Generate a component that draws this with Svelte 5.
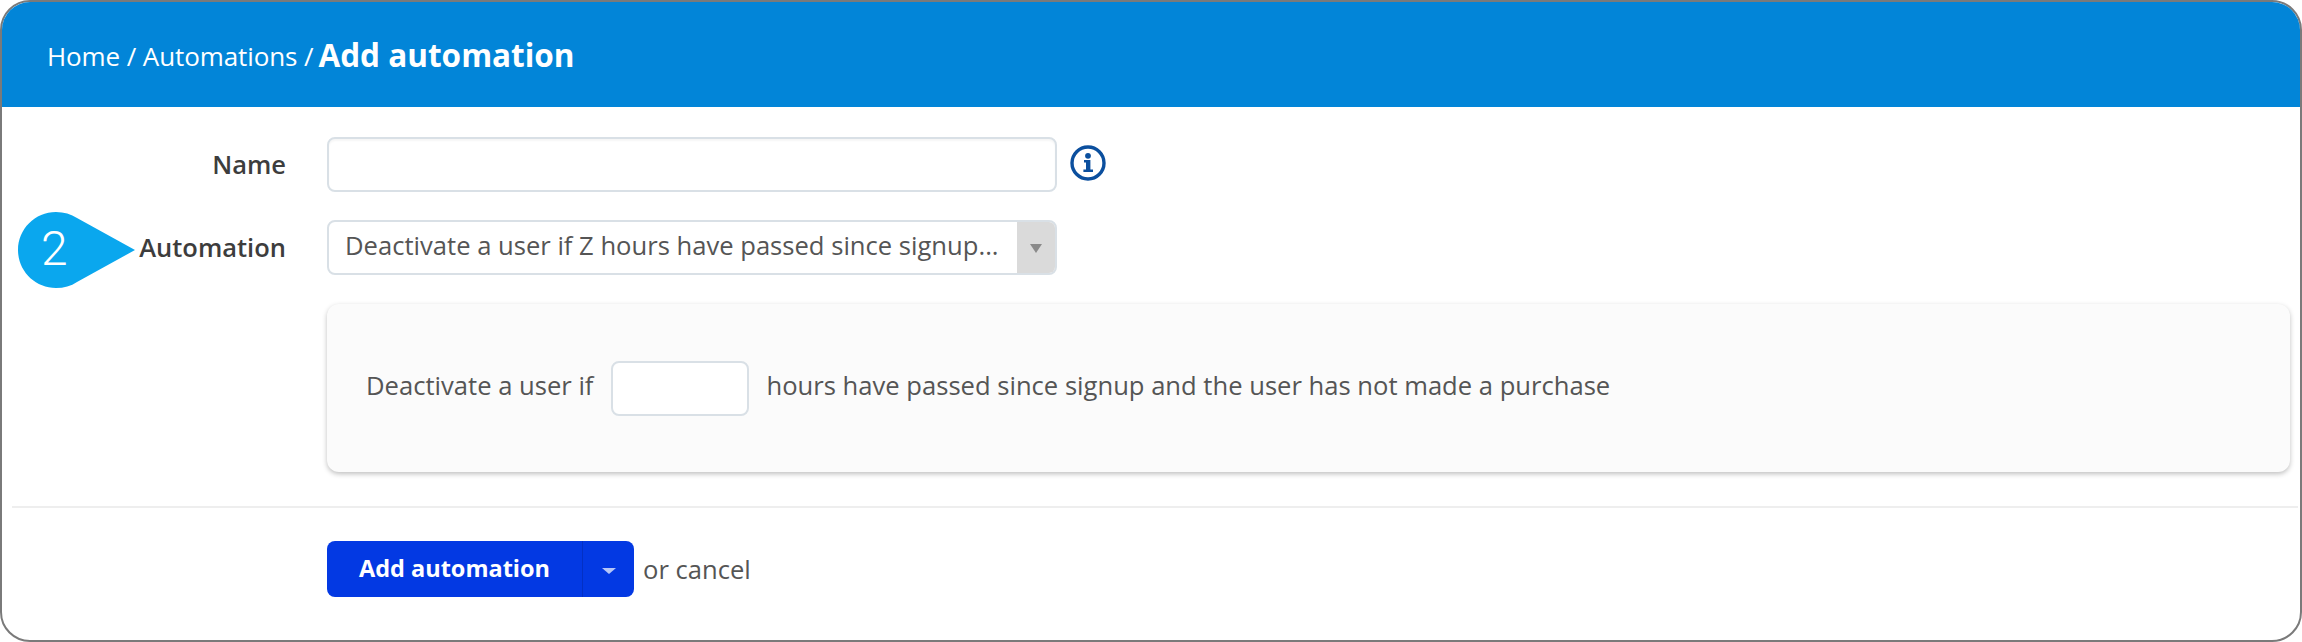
<script>
  let name = $state('');
  let hours = $state('');
</script>

<div class="frame">
  <header class="topbar">
    <span class="crumb">Home / Automations /</span>
    <h1>Add automation</h1>
  </header>

  <form class="form" onsubmit={(e) => e.preventDefault()}>
    <div class="row">
      <label class="label" for="auto-name">Name</label>
      <div class="field">
        <input id="auto-name" class="input name-input" type="text" bind:value={name} />
        <svg class="info" viewBox="0 0 36 36" aria-hidden="true">
          <circle cx="18" cy="18" r="16" fill="none" stroke="#0b4f9e" stroke-width="3.4" />
          <circle cx="18" cy="10.8" r="2.9" fill="#0b4f9e" />
          <path d="M14 15h6.4v9.4H23V27H13.4v-2.6h2.6v-6.8H14z" fill="#0b4f9e" />
        </svg>
      </div>
    </div>

    <div class="row">
      <span class="label">Automation</span>
      <div class="field">
        <div class="select">
          <span class="select-text">Deactivate a user if Z hours have passed since signup...</span>
          <span class="select-arrow"><i></i></span>
        </div>
      </div>
    </div>

    <div class="row">
      <span></span>
      <div class="card">
        <span>Deactivate a user if</span>
        <input class="input hours-input" type="text" bind:value={hours} />
        <span>hours have passed since signup and the user has not made a purchase</span>
      </div>
    </div>

    <hr class="divider" />

    <div class="row">
      <span></span>
      <div class="actions">
        <div class="split-btn">
          <button class="btn-main" type="submit">Add automation</button>
          <button class="btn-caret" type="button" aria-label="More options"><i></i></button>
        </div>
        <span class="cancel">or cancel</span>
      </div>
    </div>
  </form>

  <div class="badge">
    <svg viewBox="0 0 120 78" aria-hidden="true">
      <path d="M39 1C47 1 54 3 60 7L118 39L60 71C54 75 47 77 39 77C18 77 1 60 1 39C1 18 18 1 39 1Z" fill="#0aa7ee" />
    </svg>
    <span>2</span>
  </div>
</div>

<style>
  :global(body) {
    margin: 0;
    background: #fff;
  }

  .frame {
    position: relative;
    box-sizing: border-box;
    height: 642px;
    border: 2px solid #7a7a7a;
    border-radius: 30px;
    overflow: hidden;
    background: #fff;
    font-family: "Open Sans", sans-serif;
    color: #4a4a4a;
  }

  .topbar {
    display: flex;
    align-items: center;
    gap: 5px;
    height: 105px;
    padding-left: 45px;
    background: #0285d8;
    color: #fff;
  }

  .crumb {
    font-size: 26px;
    letter-spacing: -0.1px;
    margin-top: 2px;
  }

  h1 {
    margin: 0;
    font-size: 31.5px;
    font-weight: 700;
  }

  .form {
    display: flex;
    flex-direction: column;
    padding-top: 30px;
  }

  .row {
    display: grid;
    grid-template-columns: 284px 1fr;
    column-gap: 41px;
    align-items: center;
    margin-bottom: 28px;
    padding-right: 10px;
  }

  .label {
    text-align: right;
    font-size: 25.5px;
    font-weight: 600;
    color: #3d3d3d;
    margin-top: -2px;
  }

  .field {
    display: flex;
    align-items: center;
    gap: 13px;
  }

  .input {
    box-sizing: border-box;
    height: 55px;
    border: 2px solid #d9e0e6;
    border-radius: 8px;
    background: #fff;
  }

  .name-input {
    width: 730px;
    box-shadow: inset 0 2px 2px rgba(0, 0, 0, 0.04);
  }

  .info {
    width: 36px;
    height: 36px;
    margin-top: -3px;
  }

  .select {
    box-sizing: border-box;
    display: flex;
    justify-content: space-between;
    width: 730px;
    height: 55px;
    border: 2px solid #d9e0e6;
    border-radius: 8px;
    overflow: hidden;
    font-size: 25.6px;
    color: #555;
  }

  .select-text {
    padding: 0 0 0 16px;
    line-height: 47px;
  }

  .select-arrow {
    display: flex;
    align-items: center;
    justify-content: center;
    width: 38px;
    background: #dadada;
  }

  .select-arrow i {
    width: 0;
    height: 0;
    border-left: 6px solid transparent;
    border-right: 6px solid transparent;
    border-top: 9px solid #8a8a8a;
    margin-top: 2px;
  }

  .card {
    box-sizing: border-box;
    display: flex;
    align-items: center;
    height: 168px;
    margin-top: 1px;
    padding: 0 0 6px 39px;
    border-radius: 12px;
    background: #fbfbfb;
    box-shadow: 0 2px 5px rgba(0, 0, 0, 0.25);
    font-size: 25.6px;
    color: #555;
  }

  .hours-input {
    width: 138px;
    margin: 6px 17px 0 18px;
  }

  .divider {
    width: calc(100% - 12px);
    margin: 6px 0 34px 10px;
    border: 0;
    border-top: 2px solid #eeeeee;
  }

  .actions {
    display: flex;
    align-items: center;
    gap: 9px;
    margin-top: -1px;
  }

  .split-btn {
    display: flex;
    height: 56px;
    border-radius: 8px;
    overflow: hidden;
    background: #0339e3;
  }

  .split-btn button {
    border: 0;
    background: transparent;
    color: #fff;
    font-family: inherit;
  }

  .btn-main {
    width: 256px;
    padding: 0 0 3px;
    font-size: 23.5px;
    font-weight: 700;
    border-right: 1px solid #0330c4 !important;
  }

  .btn-caret {
    display: flex;
    align-items: center;
    justify-content: center;
    width: 51px;
    padding: 0;
  }

  .btn-caret i {
    width: 0;
    height: 0;
    border-left: 7px solid transparent;
    border-right: 7px solid transparent;
    border-top: 6px solid #b6c6f7;
    margin-top: 3px;
  }

  .cancel {
    font-size: 25.6px;
    color: #555;
  }

  .badge {
    position: absolute;
    left: 15px;
    top: 209px;
    width: 120px;
    height: 78px;
  }

  .badge svg {
    display: block;
    width: 120px;
    height: 78px;
  }

  .badge span {
    position: absolute;
    left: 24px;
    top: 11px;
    font-family: Roboto, sans-serif;
    font-weight: 300;
    font-size: 48px;
    line-height: 54px;
    color: #fff;
  }
</style>
